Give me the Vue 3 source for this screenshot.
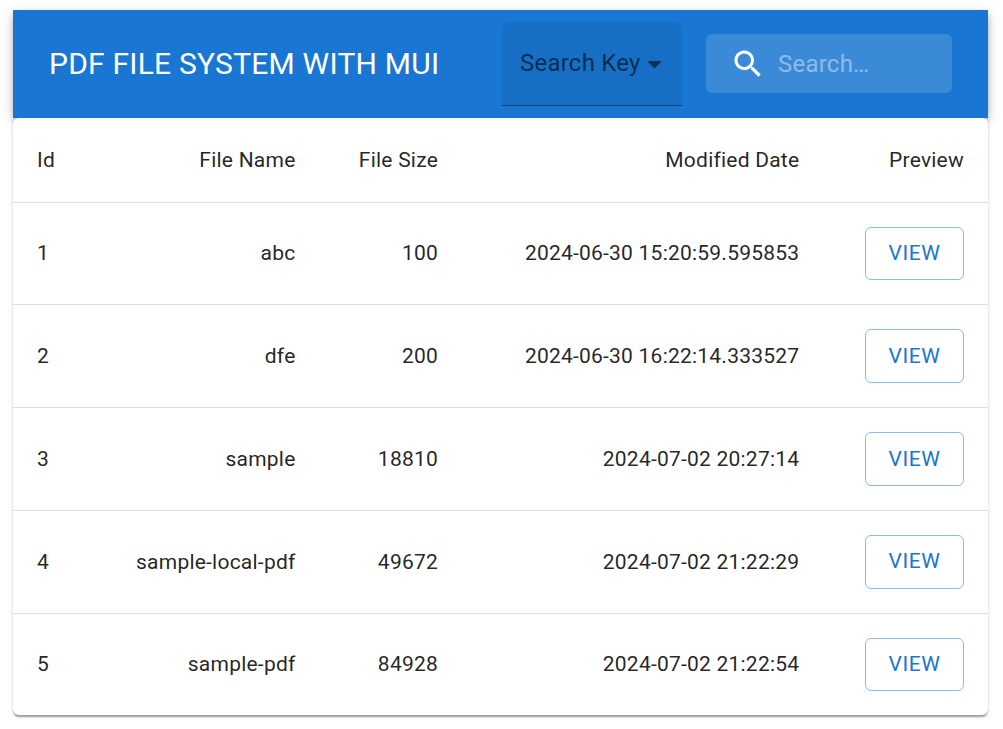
<script setup>
const files = [
  { id: 1, name: 'abc', size: 100, modified: '2024-06-30 15:20:59.595853' },
  { id: 2, name: 'dfe', size: 200, modified: '2024-06-30 16:22:14.333527' },
  { id: 3, name: 'sample', size: 18810, modified: '2024-07-02 20:27:14' },
  { id: 4, name: 'sample-local-pdf', size: 49672, modified: '2024-07-02 21:22:29' },
  { id: 5, name: 'sample-pdf', size: 84928, modified: '2024-07-02 21:22:54' },
]
</script>

<template>
  <div class="page">
    <header class="bar">
      <h1 class="title">PDF FILE SYSTEM WITH MUI</h1>
      <div class="select">
        <span class="select-label">Search Key</span>
        <svg class="arrow" viewBox="7 10 10 5"><path d="m7 10 5 5 5-5z" /></svg>
      </div>
      <label class="search">
        <svg class="search-icon" viewBox="0 0 24 24">
          <path d="M15.5 14h-.79l-.28-.27C15.41 12.59 16 11.11 16 9.5 16 5.91 13.09 3 9.5 3S3 5.91 3 9.5 5.91 16 9.5 16c1.61 0 3.09-.59 4.23-1.57l.27.28v.79l5 4.99L20.49 19l-4.99-5zm-6 0C7.01 14 5 11.99 5 9.5S7.01 5 9.5 5 14 7.01 14 9.5 11.99 14 9.5 14z" />
        </svg>
        <input class="search-input" type="text" placeholder="Search…" aria-label="search" />
      </label>
    </header>
    <main class="paper">
      <div class="row head">
        <span>Id</span>
        <span>File Name</span>
        <span>File Size</span>
        <span>Modified Date</span>
        <span>Preview</span>
      </div>
      <div v-for="file in files" :key="file.id" class="row">
        <span>{{ file.id }}</span>
        <span>{{ file.name }}</span>
        <span>{{ file.size }}</span>
        <span>{{ file.modified }}</span>
        <span class="action"><button class="view" type="button">VIEW</button></span>
      </div>
    </main>
  </div>
</template>

<style>
body {
  margin: 0;
  background: #fff;
}
</style>

<style scoped>
.page {
  box-sizing: border-box;
  height: 729px;
  padding: 10px 15px 0 13px;
  font-family: Roboto, "Liberation Sans", sans-serif;
  color: rgba(0, 0, 0, 0.87);
  overflow: hidden;
}
.bar {
  box-sizing: border-box;
  height: 108px;
  padding: 0 36px;
  display: flex;
  align-items: center;
  background: #1976d2;
  box-shadow: 0 3px 6px -1.5px rgba(0, 0, 0, 0.2), 0 6px 7.5px 0 rgba(0, 0, 0, 0.14),
    0 1.5px 15px 0 rgba(0, 0, 0, 0.12);
}
.title {
  flex: 1;
  margin: 0;
  padding-bottom: 1px;
  color: #fff;
  font-size: 30px;
  font-weight: 400;
  line-height: 48px;
  letter-spacing: 0.0075em;
  white-space: nowrap;
}
.select {
  box-sizing: border-box;
  width: 180px;
  height: 84px;
  margin-right: 24px;
  padding: 0 20px 0 18px;
  display: flex;
  align-items: center;
  justify-content: space-between;
  background: rgba(0, 0, 0, 0.06);
  border-bottom: 1px solid rgba(0, 0, 0, 0.42);
  border-radius: 6px 6px 0 0;
}
.select-label {
  padding-bottom: 1px;
  color: rgba(0, 0, 0, 0.6);
  font-size: 24px;
  line-height: 34px;
  letter-spacing: 0.00938em;
  white-space: nowrap;
}
.arrow {
  width: 15px;
  height: 7.5px;
  margin-top: 1.5px;
  fill: rgba(0, 0, 0, 0.54);
}
.search {
  box-sizing: border-box;
  width: 246px;
  height: 59px;
  margin-bottom: 1px;
  padding: 1px 0 0 24px;
  display: flex;
  align-items: center;
  background: rgba(255, 255, 255, 0.15);
  border-radius: 6px;
}
.search-icon {
  flex: none;
  width: 36px;
  height: 36px;
  fill: #fff;
}
.search-input {
  width: 150px;
  margin-left: 12px;
  padding: 0;
  border: 0;
  outline: 0;
  background: none;
  color: #fff;
  font: 400 24px/34.5px Roboto, "Liberation Sans", sans-serif;
  letter-spacing: 0.00938em;
}
.search-input::placeholder {
  color: #fff;
  opacity: 0.42;
}
.paper {
  position: relative;
  background: #fff;
  border-radius: 6px;
  box-shadow: 0 3px 1.5px -1.5px rgba(0, 0, 0, 0.2), 0 1.5px 1.5px 0 rgba(0, 0, 0, 0.14),
    0 1.5px 4.5px 0 rgba(0, 0, 0, 0.12);
}
.row {
  box-sizing: border-box;
  height: 103px;
  display: grid;
  grid-template-columns: 83.5px 223px 142.5px 361.3px 164.7px;
  align-items: center;
  border-bottom: 1px solid #e0e0e0;
  font-size: 21px;
  line-height: 30px;
  letter-spacing: 0.01071em;
}
.row.head {
  height: 85px;
}
.row.head + .row {
  height: 102px;
}
.row:last-child {
  height: 101px;
  border-bottom: 0;
}
.row > span {
  padding: 0 24px;
  text-align: right;
  white-space: nowrap;
}
.row > span:first-child {
  text-align: left;
}
.row > .action {
  display: flex;
  justify-content: flex-end;
}
.row.head + .row > span:not(.action),
.row:last-child > span:not(.action) {
  padding-bottom: 1px;
}
.view {
  box-sizing: border-box;
  width: 99px;
  height: 54px;
  padding: 0;
  border: 1px solid rgba(25, 118, 210, 0.5);
  border-radius: 6px;
  background: transparent;
  color: #1976d2;
  font: 400 21px/36px Roboto, "Liberation Sans", sans-serif;
  letter-spacing: 0.02857em;
}
.row.head + .row .view,
.row:last-child .view {
  height: 53px;
  padding-bottom: 1px;
}
.row:nth-child(5) .view {
  padding-bottom: 2px;
}
</style>
